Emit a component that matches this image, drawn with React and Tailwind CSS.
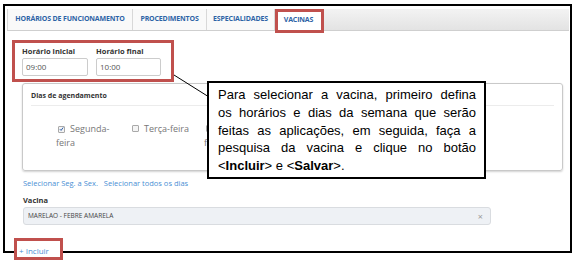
import React from "react";

const days = [
  { label: "Segunda-feira", checked: true },
  { label: "Terça-feira", checked: false },
  { label: "Quarta-feira", checked: false },
  { label: "Quinta-feira", checked: false },
  { label: "Sexta-feira", checked: false },
  { label: "Sábado", checked: false },
];

function Check({ checked }) {
  return (
    <span className="inline-flex items-center justify-center w-[7px] h-[7px] border border-[#a9a9a9] bg-[#f4f4f4] ml-[2px] mr-[5px] align-[-0px] rounded-[1px]">
      {checked && (
        <svg width="6" height="6" viewBox="0 0 6 6">
          <path d="M1 3.2 L2.5 4.7 L5 1.2" stroke="#2d5fa8" strokeWidth="1.2" fill="none" />
        </svg>
      )}
    </span>
  );
}

export default function App() {
  return (
    <div className="relative w-[575px] h-[263px] bg-white overflow-hidden pt-[4px] pl-[3px] font-['Open_Sans',sans-serif]">
      <div className="w-[569px] h-[249px] border-2 border-black flex flex-col">
        {/* Tabs */}
        <div className="shrink-0 mt-[3px] ml-[2px] mr-[1px] h-[22px] flex border-b border-[#cfcfcf] bg-linear-to-b from-[#f3f3f3] to-[#e3e3e3]">
          <div className="w-[126px] flex items-center justify-center border-l border-r border-[#d8d8d8] bg-[#f9f9f9] text-[7px] font-bold text-[#2d63a6] tracking-[-0.15px]">
            HORÁRIOS DE FUNCIONAMENTO
          </div>
          <div className="w-[74px] flex items-center justify-center border-r border-[#d8d8d8] bg-[#f9f9f9] text-[7px] font-bold text-[#2d63a6] tracking-[-0.15px]">
            PROCEDIMENTOS
          </div>
          <div className="w-[68px] flex items-center justify-center border-r border-[#d8d8d8] bg-[#f9f9f9] text-[7px] font-bold text-[#2d63a6] tracking-[-0.15px]">
            ESPECIALIDADES
          </div>
          <div className="w-[48px] -mb-px flex items-center justify-center border-r border-[#d8d8d8] bg-white text-[7px] font-bold text-[#2d63a6] tracking-[-0.15px]">
            VACINAS
          </div>
        </div>

        {/* Form */}
        <div className="shrink-0 pl-[17px] pr-[7px] flex flex-col">
          <div className="mt-[15px] flex gap-[8px]">
            <div className="flex flex-col w-[66px]">
              <div className="text-[7.5px] leading-[10px] font-bold text-[#333]">Horário inicial</div>
              <div className="mt-[2px] h-[18px] border border-[#cccccc] rounded-[2px] text-[8px] text-[#555] pl-[3px] flex items-center">
                09:00
              </div>
            </div>
            <div className="flex flex-col w-[65px]">
              <div className="text-[7.5px] leading-[10px] font-bold text-[#333]">Horário final</div>
              <div className="mt-[2px] h-[18px] border border-[#cccccc] rounded-[2px] text-[8px] text-[#555] pl-[3px] flex items-center">
                10:00
              </div>
            </div>
          </div>

          <div className="mt-[7px] h-[88px] border border-[#c9c9c9] rounded-[3px] shadow-[0_1px_2px_rgba(0,0,0,0.18)] px-[8px] pt-[6px] flex flex-col">
            <div className="text-[7px] leading-[12px] font-bold text-[#333]">Dias de agendamento</div>
            <div className="mt-[3px] border-t border-[#ececec]" />
            <div className="mt-[16px] ml-[25px] flex gap-[12px]">
              {days.map((d) => (
                <div key={d.label} className="w-[62px] text-[9px] leading-[14px] text-[#777]">
                  <Check checked={d.checked} />
                  {d.label}
                </div>
              ))}
            </div>
          </div>

          <div className="mt-[7px] ml-[1px] flex gap-[6px] text-[7.5px] leading-[10px] text-[#4a8fd4]">
            <span>Selecionar Seg. a Sex.</span>
            <span>Selecionar todos os dias</span>
          </div>

          <div className="mt-[7px] ml-[1px] text-[7.5px] leading-[10px] font-bold text-[#333]">Vacina</div>
          <div className="mt-[2px] ml-[1px] w-[468px] h-[18px] border border-[#d9dce0] rounded-[3px] bg-[#eef1f5] flex items-center justify-between pl-[4px] pr-[7px]">
            <span className="text-[6.5px] text-[#444]">MARELAO - FEBRE AMARELA</span>
            <span className="text-[9px] leading-[9px] text-[#9a9a9a]">×</span>
          </div>
        </div>

        {/* Incluir */}
        <div className="shrink-0 relative z-10 mt-[13px] ml-[9px] w-[49px] h-[22px] border-[3px] border-[#c0504d] bg-white pl-[2px] pt-[5px] text-[8px] leading-[10px] text-[#4a8fd4]">
          + Incluir
        </div>
      </div>

      {/* annotation boxes */}
      <div className="absolute left-[275px] top-[9px] w-[49px] h-[24px] border-[3px] border-[#c0504d]" />
      <div className="absolute left-[12px] top-[40px] w-[162px] h-[42px] border-[3px] border-[#c0504d]" />

      <svg className="absolute left-0 top-0 pointer-events-none" width="575" height="263">
        <line x1="174" y1="75" x2="209" y2="97" stroke="#000" strokeWidth="1" />
      </svg>

      <div className="absolute left-[207px] top-[81px] w-[279px] h-[98px] border-2 border-black bg-white pl-[9px] pr-[8px] pt-[3px] font-['Liberation_Sans',Arial,sans-serif] text-[13px] leading-[17.75px] text-black">
        <div className="text-justify [text-align-last:justify]">Para selecionar a vacina, primeiro defina</div>
        <div className="text-justify [text-align-last:justify]">os horários e dias da semana que serão</div>
        <div className="text-justify [text-align-last:justify]">feitas as aplicações, em seguida, faça a</div>
        <div className="text-justify [text-align-last:justify]">pesquisa da vacina e clique no botão</div>
        <div>
          &lt;<b>Incluir</b>&gt; e &lt;<b>Salvar</b>&gt;.
        </div>
      </div>
    </div>
  );
}
